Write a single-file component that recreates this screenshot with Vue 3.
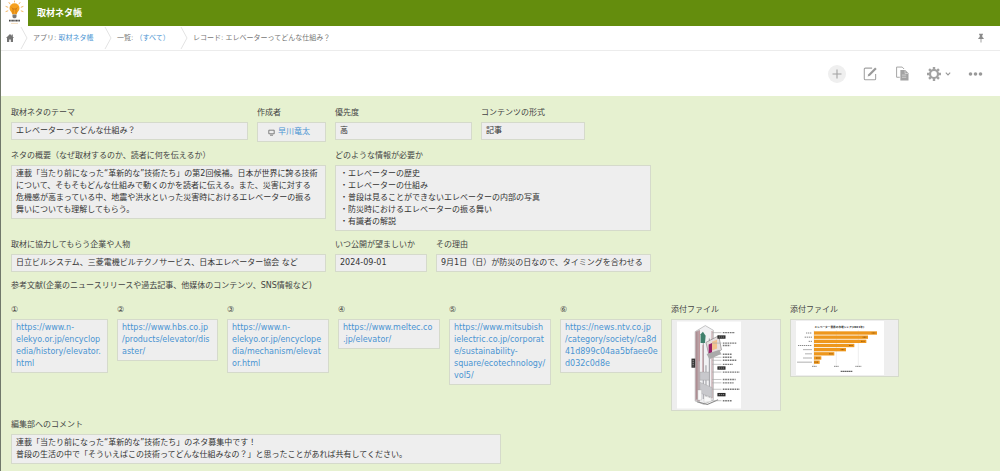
<script setup>
const topFields = [
  { label: '取材ネタのテーマ', text: 'エレベーターってどんな仕組み？' },
  { label: '作成者', user: '早川竜太' },
  { label: '優先度', text: '高' },
  { label: 'コンテンツの形式', text: '記事' },
]
const detailFields = [
  {
    label: 'ネタの概要（なぜ取材するのか、読者に何を伝えるか）',
    text: '連載「当たり前になった“革新的な”技術たち」の第2回候補。日本が世界に誇る技術\nについて、そもそもどんな仕組みで動くのかを読者に伝える。また、災害に対する\n危機感が高まっている中、地震や洪水といった災害時におけるエレベーターの振る\n舞いについても理解してもらう。',
  },
  {
    label: 'どのような情報が必要か',
    text: '・エレベーターの歴史\n・エレベーターの仕組み\n・普段は見ることができないエレベーターの内部の写真\n・防災時におけるエレベーターの振る舞い\n・有識者の解説',
  },
]
const scheduleFields = [
  { label: '取材に協力してもらう企業や人物', text: '日立ビルシステム、三菱電機ビルテクノサービス、日本エレベーター協会 など' },
  { label: 'いつ公開が望ましいか', text: '2024-09-01' },
  { label: 'その理由', text: '9月1日（日）が防災の日なので、タイミングを合わせる' },
]
const links = [
  { label: '①', lines: ['https://www.n-', 'elekyo.or.jp/encyclop', 'edia/history/elevator.', 'html'] },
  { label: '②', lines: ['https://www.hbs.co.jp', '/products/elevator/dis', 'aster/'] },
  { label: '③', lines: ['https://www.n-', 'elekyo.or.jp/encyclope', 'dia/mechanism/elevat', 'or.html'] },
  { label: '④', lines: ['https://www.meltec.co', '.jp/elevator/'] },
  { label: '⑤', lines: ['https://www.mitsubish', 'ielectric.co.jp/corporat', 'e/sustainability-', 'square/ecotechnology/', 'vol5/'] },
  { label: '⑥', lines: ['https://news.ntv.co.jp', '/category/society/ca8d', '41d899c04aa5bfaee0e', 'd032c0d8e'] },
]
const comment =
  '連載「当たり前になった“革新的な”技術たち」のネタ募集中です！\n普段の生活の中で「そういえばこの技術ってどんな仕組みなの？」と思ったことがあれば共有してください。'

const bars = [
  { w: 189, l: 18 },
  { w: 162, l: 22 },
  { w: 157, l: 10 },
  { w: 121, l: 42 },
  { w: 96, l: 26 },
  { w: 61, l: 20 },
  { w: 22, l: 26 },
  { w: 17, l: 44 },
]
const callouts = [
  [33, 36], [64, 40], [97, 28], [106, 28], [115, 42], [127, 30],
  [150, 50], [172, 38], [182, 32], [201, 50], [235, 28],
]
</script>

<template>
  <div class="page">
    <header class="header">
      <a class="logo" href="#" aria-label="ホーム">
        <svg viewBox="0 0 27 27" width="27" height="27">
          <g stroke="#efae55" stroke-width="0.9" stroke-linecap="round">
            <path d="M13.5 1v1M8 2.5l1 1.4M19 2.5l-1 1.4M5 6.5l1.8.7M22 6.5l-1.8.7M5 11.5l1.8-.6M22 11.5l-1.8-.6" />
          </g>
          <path d="M13.5 3.2a5 5 0 0 0-5 5c0 2.6 2.3 3.4 2.7 6h4.6c.4-2.6 2.7-3.4 2.7-6a5 5 0 0 0-5-5z" fill="#f6a01e" />
          <path d="M12 13.5V9l-1.2-1.5M15 13.5V9l1.2-1.5M12 9h3" fill="none" stroke="#c87410" stroke-width="0.8" />
          <path d="M11.5 14.4h4v2.8l-1.2 1h-1.6l-1.2-1z" fill="#777" />
          <path d="M8 20.7h11" stroke="#444" stroke-width="1.7" stroke-dasharray="1.1 .3" />
          <path d="M10 23.4h7" stroke="#f4d5ae" stroke-width="0.8" />
        </svg>
      </a>
      <h1>取材ネタ帳</h1>
    </header>

    <nav class="crumbs" aria-label="パンくず">
      <a class="home" href="#" aria-label="ポータル">
        <svg viewBox="0 0 10 10" width="10" height="10">
          <path d="M5 1L1 5h1v4h2.2V6.4h1.6V9H8V5h1L7.8 3.8V1.6H6.7v1.1z" fill="#747474" />
        </svg>
      </a>
      <svg class="sep" viewBox="0 0 8 22" width="8" height="22"><path d="M1 0l6 11-6 11" /></svg>
      <span class="crumb app">アプリ: <a href="#">取材ネタ帳</a></span>
      <svg class="sep" viewBox="0 0 8 22" width="8" height="22"><path d="M1 0l6 11-6 11" /></svg>
      <span class="crumb view">一覧: <a href="#">（すべて）</a></span>
      <svg class="sep" viewBox="0 0 8 22" width="8" height="22"><path d="M1 0l6 11-6 11" /></svg>
      <span class="crumb">レコード: エレベーターってどんな仕組み？</span>
      <button class="icon pin" type="button" aria-label="固定">
        <svg viewBox="0 0 8 10" width="8" height="10">
          <path d="M2 .8h4v.9h-.7v2.4l1.4 1.2v.8H4.4V9.4h-.8V6.1H1.3v-.8l1.4-1.2V1.7H2z" fill="#8a8a8a" />
        </svg>
      </button>
    </nav>

    <div class="toolbar">
      <button class="icon add" type="button" aria-label="追加">
        <svg viewBox="0 0 18 18" width="18" height="18"><path d="M9 4.5v9M4.5 9h9" stroke="#a2a2a2" stroke-width="1.1" /></svg>
      </button>
      <button class="icon" type="button" aria-label="編集">
        <svg viewBox="0 0 14 14" width="15" height="15">
          <path d="M8.5 2H2.2a1 1 0 0 0-1 1v8.8a1 1 0 0 0 1 1h8.6a1 1 0 0 0 1-1V7.5" fill="none" stroke="#a2a2a2" stroke-width="1" />
          <path d="M4.3 9.9l.7-2.2 6.3-6.3 1.5 1.5-6.3 6.3z" fill="#999" />
        </svg>
      </button>
      <button class="icon" type="button" aria-label="複製">
        <svg viewBox="0 0 14 14" width="15" height="15">
          <path d="M4.5 10.5h-3V1h5.2l1.8 1.8" fill="none" stroke="#a2a2a2" stroke-width="0.9" />
          <path d="M5 3.8h4.6l3 3v6.7H5z" fill="#a2a2a2" />
          <path d="M9.4 4v3h3M6.500 8.500h4M6.500 10.500h4" fill="none" stroke="#ddd" stroke-width="0.7" />
        </svg>
      </button>
      <button class="icon gear" type="button" aria-label="設定">
        <svg viewBox="0 0 14 14" width="14" height="14">
          <g stroke="#a2a2a2" stroke-width="2.4">
            <path d="M7 0v3M7 11v3M0 7h3M11 7h3M2.050 2.050l2.100 2.100M9.850 9.850l2.100 2.100M2.050 11.950l2.100-2.100M9.850 4.150l2.100-2.100" />
          </g>
          <circle cx="7" cy="7" r="4" fill="none" stroke="#a2a2a2" stroke-width="2.2" />
        </svg>
        <svg viewBox="0 0 6 4" width="6" height="4"><path d="M.8.6L3 2.900 5.200.6" fill="none" stroke="#999" stroke-width="1.1" /></svg>
      </button>
      <button class="icon" type="button" aria-label="その他">
        <svg viewBox="0 0 15 14" width="15" height="14">
          <g fill="#999"><circle cx="2.5" cy="7" r="1.8" /><circle cx="7.5" cy="7" r="1.8" /><circle cx="12.5" cy="7" r="1.8" /></g>
        </svg>
      </button>
    </div>

    <main class="record">
      <dl class="row row-top">
        <div v-for="f in topFields" :key="f.label" class="field">
          <dt>{{ f.label }}</dt>
          <dd v-if="f.user" class="user">
            <svg viewBox="0 0 7 7" width="7" height="7">
              <path d="M.8 1.2h5.4v3.6H.8zM2 6.2h3" fill="none" stroke="#666" stroke-width="0.8" />
            </svg>
            <a href="#">{{ f.user }}</a>
          </dd>
          <dd v-else>{{ f.text }}</dd>
        </div>
      </dl>
      <dl class="row row-detail">
        <div v-for="f in detailFields" :key="f.label" class="field">
          <dt>{{ f.label }}</dt>
          <dd>{{ f.text }}</dd>
        </div>
      </dl>
      <dl class="row row-schedule">
        <div v-for="f in scheduleFields" :key="f.label" class="field">
          <dt>{{ f.label }}</dt>
          <dd>{{ f.text }}</dd>
        </div>
      </dl>
      <h2>参考文献(企業のニュースリリースや過去記事、他媒体のコンテンツ、SNS情報など)</h2>
      <dl class="row row-links">
        <div v-for="l in links" :key="l.label" class="field">
          <dt>{{ l.label }}</dt>
          <dd><a :href="l.lines.join('')">{{ l.lines.join('\n') }}</a></dd>
        </div>
        <div class="field">
          <dt>添付ファイル</dt>
          <dd class="file">
            <svg viewBox="0 0 190 258" width="64" height="88" role="img" aria-label="エレベーターの構造図">
              <rect width="190" height="258" fill="#fff" />
              <path d="M54 30L84 12l24 14v206l-28 14-26-10z" fill="#f1f1f3" stroke="#aaa" stroke-width="2" />
              <path d="M54 30l14-6v214l-14-4z" fill="#b9a9ad" />
              <path d="M59 30v200M104 28v200" stroke="#a0686e" stroke-width="2" />
              <path d="M78 60v170M96 50v180M86 130v100" stroke="#9a9aa0" stroke-width="3" />
              <path d="M77 70v95M66 28v90" stroke="#c08084" stroke-width="2" />
              <path d="M70 38l7-8 8 12-2 22H70z" fill="#3f806c" />
              <path d="M86 62l38-20 8 42-36 20z" fill="#e5dede" stroke="#888" stroke-width="2" />
              <path d="M94 68l10-4v28l-10 4z" fill="#991d66" />
              <path d="M104 60l15-6v26l-15 6z" fill="#f2c18e" />
              <path d="M88 96l38-12 5 12-35 16z" fill="#aaa" />
              <path d="M68 150h28v24H68zM68 180l36 16v30l-36-14z" fill="#c8c8cc" stroke="#999" />
              <path d="M62 203h11v30H62zM80 220l22 7v10l-22 3z" fill="#f8f8f8" stroke="#aaa" />
              <path d="M60 238l30 8 32-14" fill="none" stroke="#888" stroke-width="3" />
              <rect x="43" y="110" width="11" height="27" fill="#333" />
              <path d="M48 114v19" stroke="#ddd" stroke-width="2" stroke-dasharray="4 2" />
              <g stroke="#777" stroke-width="2">
                <g v-for="([y, w], i) in callouts" :key="i">
                  <path :d="`M104 ${y}h28`" stroke="#aaa" />
                  <path :d="`M136 ${y}h${w}`" stroke-width="4" stroke-dasharray="5 2" />
                </g>
              </g>
              <path d="M136 71h22" stroke="#777" stroke-width="4" stroke-dasharray="5 2" />
              <g fill="#292929"><rect x="120" y="41" width="24" height="10" /><rect x="120" y="133" width="24" height="10" /><rect x="120" y="212" width="24" height="10" /></g>
              <path d="M124 46h17M124 138h17M124 217h17" stroke="#bbb" stroke-width="2" stroke-dasharray="4 2" />
            </svg>
          </dd>
        </div>
        <div class="field">
          <dt>添付ファイル</dt>
          <dd class="file">
            <svg class="chart" viewBox="0 0 264 162" width="88" height="54" role="img" aria-label="市場シェアのグラフ">
              <rect width="264" height="162" fill="#fff" />
              <text x="130" y="20" text-anchor="middle">エレベーター業界の市場シェア(2021年)</text>
              <path d="M54 28v105M121 28v105M187 28v105" stroke="#e6e6e6" stroke-width="2" />
              <g v-for="(b, i) in bars" :key="i">
                <rect x="54" :y="31 + i * 12.5" :width="b.w" height="10" fill="#ee971c" />
                <path :d="`M${48 - b.l} ${36 + i * 12.5}h${b.l}`" stroke="#888" stroke-width="3" stroke-dasharray="4 2" />
                <path :d="`M${52 + b.w - 14} ${36 + i * 12.5}h12`" stroke="#9c5c0d" stroke-width="3" stroke-dasharray="3 1" />
              </g>
              <path d="M48 136h14M114 136h14M178 136h18" stroke="#888" stroke-width="3" stroke-dasharray="4 1" />
              <path d="M134 151h36" stroke="#666" stroke-width="4" stroke-dasharray="5 1" />
            </svg>
          </dd>
        </div>
      </dl>
      <dl class="row row-comment">
        <div class="field">
          <dt>編集部へのコメント</dt>
          <dd>{{ comment }}</dd>
        </div>
      </dl>
    </main>
  </div>
</template>

<style>
body {
  margin: 0;
  background: #e6f1d0;
}
</style>

<style scoped>
.page {
  border-left: 1px solid #70786a;
  font-family: "DejaVu Sans", "Noto Sans CJK JP", sans-serif;
  font-size: 8px;
  line-height: 12px;
  color: #444;
  background: #e6f1d0;
}
a {
  color: #4a94d2;
  text-decoration: none;
}
svg {
  display: block;
  flex: none;
}
h1,
h2,
dl,
dd {
  margin: 0;
}
.header {
  display: flex;
  align-items: center;
  gap: 9px;
  height: 26px;
  background: #648d0d;
}
.logo {
  align-self: flex-start;
  height: 27px;
  background: #fff;
}
h1 {
  font-size: 9px;
  font-weight: 700;
  color: #fff;
}
.crumbs {
  display: flex;
  align-items: center;
  height: 24px;
  padding: 0 15px 0 4px;
  background: #fff;
  border-bottom: 1px solid #ececec;
  font-size: 7px;
  color: #777;
}
.sep {
  margin-right: 5px;
  fill: none;
  stroke: #e3e3e3;
}
.home {
  margin-right: 5px;
}
.crumb {
  white-space: nowrap;
}
.app {
  min-width: 71px;
}
.view {
  min-width: 63px;
}
.icon {
  display: flex;
  align-items: center;
  padding: 0;
  border: 0;
  background: none;
}
.pin {
  margin-left: auto;
}
.toolbar {
  display: flex;
  align-items: center;
  justify-content: flex-end;
  gap: 17px;
  height: 45px;
  padding-right: 17px;
  background: #fff;
}
.add {
  border-radius: 50%;
  background: #efefef;
}
.gear {
  gap: 4px;
}
.record {
  display: flex;
  flex-direction: column;
  gap: 8px;
  padding: 11px 11px 7px 10px;
}
.row {
  display: grid;
  align-items: start;
  gap: 9px;
}
.row-top {
  grid-template-columns: 237fr 69fr 137fr 104fr 395fr;
}
.row-detail {
  grid-template-columns: 315fr 316fr 329fr;
}
.row-schedule {
  grid-template-columns: 315fr 92fr 215fr 329fr;
}
.row-links {
  grid-template-columns: 97fr 101fr 102fr 102fr 102fr 102fr 110fr 109fr 81fr;
}
.row-comment {
  grid-template-columns: 490fr 479fr;
}
.field {
  display: flex;
  flex-direction: column;
  gap: 3px;
  min-width: 0;
}
dt {
  white-space: nowrap;
}
dd {
  padding: 2px 4px;
  border: 1px solid #d5dacb;
  background: #eee;
  color: #333;
  white-space: pre-wrap;
  overflow-wrap: anywhere;
}
.row-links dd {
  padding-right: 2px;
}
.row-links .file {
  padding: 1px 5px;
}
.user {
  display: flex;
  align-items: center;
  gap: 3px;
  padding: 3px 10px;
}
h2 {
  padding-bottom: 4px;
  font-size: 8px;
  font-weight: 400;
}
.chart text {
  font-size: 8px;
  font-weight: 700;
  fill: #222;
}
</style>
